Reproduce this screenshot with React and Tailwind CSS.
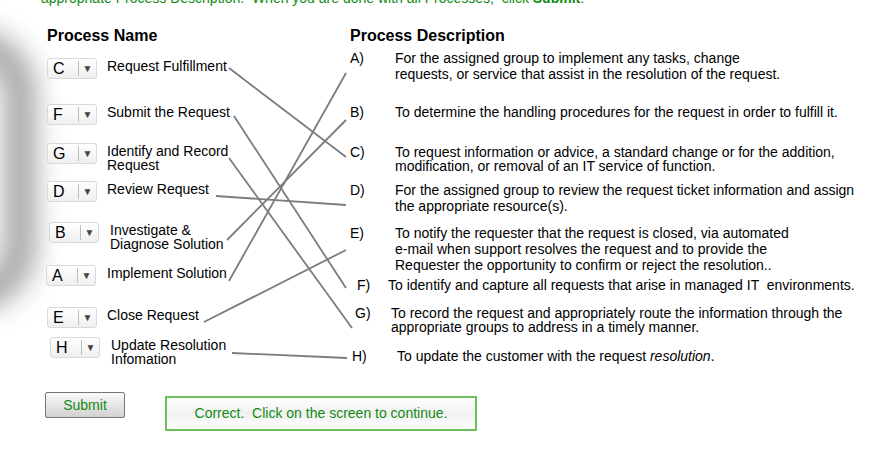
import React from 'react'

const green = 'text-[#118a11]'

const names = [
  { letter: 'C', label: ['Request Fulfillment'], h: 'h-[46px]', box: 'pl-[47px] w-[107px]' },
  { letter: 'F', label: ['Submit the Request'], h: 'h-[39px]', box: 'pl-[47px] w-[107px]' },
  { letter: 'G', label: ['Identify and Record', 'Request'], h: 'h-[38px]', box: 'pl-[47px] w-[107px]' },
  { letter: 'D', label: ['Review Request'], h: 'h-[41px]', box: 'pl-[47px] w-[107px]' },
  { letter: 'B', label: ['Investigate &', 'Diagnose Solution'], h: 'h-[43px]', box: 'pl-[49px] w-[110px]' },
  { letter: 'A', label: ['Implement Solution'], h: 'h-[42px]', box: 'pl-[46px] w-[107px]' },
  { letter: 'E', label: ['Close Request'], h: 'h-[30px]', box: 'pl-[47px] w-[107px]' },
  { letter: 'H', label: ['Update Resolution', 'Infomation'], h: 'h-[40px]', box: 'pl-[50px] w-[111px]' },
]

const descs = [
  { key: 'A)', lines: ['For the assigned group to implement any tasks, change', 'requests, or service that assist in the resolution of the request.'], mt: 'mt-[5px]', lh: 'leading-[16px]', lw: 'w-[45px]', lp: 'pl-0' },
  { key: 'B)', lines: ['To determine the handling procedures for the request in order to fulfill it.'], mt: 'mt-[22px]', lh: 'leading-[16px]', lw: 'w-[45px]', lp: 'pl-0' },
  { key: 'C)', lines: ['To request information or advice, a standard change or for the addition,', 'modification, or removal of an IT service of function.'], mt: 'mt-[25px]', lh: 'leading-[14px]', lw: 'w-[45px]', lp: 'pl-0' },
  { key: 'D)', lines: ['For the assigned group to review the request ticket information and assign', 'the appropriate resource(s).'], mt: 'mt-[9px]', lh: 'leading-[16px]', lw: 'w-[45px]', lp: 'pl-0' },
  { key: 'E)', lines: ['To notify the requester that the request is closed, via automated', 'e-mail when support resolves the request and to provide the', 'Requester the opportunity to confirm or reject the resolution..'], mt: 'mt-[11px]', lh: 'leading-[16px]', lw: 'w-[45px]', lp: 'pl-0' },
  { key: 'F)', lines: ['To identify and capture all requests that arise in managed IT  environments.'], mt: 'mt-[4px]', lh: 'leading-[16px]', lw: 'w-[38px]', lp: 'pl-[7px]' },
  { key: 'G)', lines: ['To record the request and appropriately route the information through the', 'appropriate groups to address in a timely manner.'], mt: 'mt-[13px]', lh: 'leading-[14px]', lw: 'w-[41px]', lp: 'pl-[5px]' },
]

function Dropdown({ letter }) {
  return (
    <div className="flex h-[21px] w-[50px] items-center rounded-[3px] border border-[#d9d9d9] bg-gradient-to-b from-white to-[#efefef]">
      <span className="w-[30px] pl-[5px] text-[16px] leading-none text-black">{letter}</span>
      <span className="h-[15px] w-px bg-[#bdbdbd]" />
      <span className="flex-1 pt-[1px] text-center text-[10px] leading-none text-[#444]">▼</span>
    </div>
  )
}

// matching lines, from label end to letter on the right
const links = [
  [229, 68, 346, 157],
  [234, 116, 346, 288],
  [229, 158, 352, 328],
  [216, 196, 346, 205],
  [227, 240, 346, 120],
  [229, 281, 346, 73],
  [204, 322, 346, 250],
  [232, 353, 347, 358],
]

export default function App() {
  return (
    <div className="relative h-[473px] w-[878px] overflow-hidden bg-white font-['Liberation_Sans',Arial,sans-serif] text-black">
      {/* blurred ring on the left edge */}
      <div className="absolute left-[-95px] top-[30px] h-[280px] w-[130px] rounded-full border-[30px] border-[#777] opacity-70 blur-[14px]" />

      <svg className="absolute left-0 top-0" width="878" height="473">
        {links.map(([x1, y1, x2, y2], i) => (
          <line key={i} x1={x1} y1={y1} x2={x2} y2={y2} stroke="#7c7c7c" strokeWidth="1.8" />
        ))}
      </svg>

      <p className={`relative -mt-[9px] ml-[41px] whitespace-pre text-[14px] leading-[14px] ${green}`}>
        appropriate Process Description.  When you are done with all Processes,  click <b>Submit</b>.
      </p>

      <div className="relative flex">
        {/* Process names */}
        <div className="w-[350px]">
          <h2 className="ml-[47px] mt-[22px] text-[16px] font-bold leading-[18px]">Process Name</h2>
          <div className="mt-[13px]">
            {names.map((n) => (
              <div key={n.letter} className={`flex items-start ${n.h}`}>
                <div className={`shrink-0 ${n.box}`}>
                  <Dropdown letter={n.letter} />
                </div>
                <div className="pt-[1px] text-[14px] leading-[14px]">
                  {n.label.map((l) => (
                    <div key={l}>{l}</div>
                  ))}
                </div>
              </div>
            ))}
          </div>
        </div>

        {/* Process descriptions */}
        <div className="flex-1 text-[14px]">
          <h2 className="mt-[22px] text-[16px] font-bold leading-[18px]">Process Description</h2>
          {descs.map((d) => (
            <div key={d.key} className={`flex ${d.mt} ${d.lh}`}>
              <span className={`shrink-0 ${d.lw} ${d.lp}`}>{d.key}</span>
              <div className="whitespace-pre">
                {d.lines.map((l) => (
                  <div key={l}>{l}</div>
                ))}
              </div>
            </div>
          ))}
          <div className="mt-[14px] flex leading-[16px]">
            <span className="w-[47px] shrink-0 pl-[2px]">H)</span>
            <span>
              To update the customer with the request <i>resolution</i>.
            </span>
          </div>
        </div>
      </div>

      {/* bottom actions */}
      <div className="relative mt-[19px] flex items-start">
        <button className={`ml-[45px] mt-[-4px] h-[26px] w-[80px] rounded-[2px] border border-[#777] bg-gradient-to-b from-[#fafafa] to-[#d2d2d2] text-[14px] ${green}`}>
          Submit
        </button>
        <div className={`ml-[40px] flex h-[35px] w-[312px] items-center justify-center whitespace-pre border-2 border-[#6cc05a] bg-gradient-to-b from-white via-[#f1f1f1] to-white text-[14px] ${green}`}>
          Correct.  Click on the screen to continue.
        </div>
      </div>
    </div>
  )
}
